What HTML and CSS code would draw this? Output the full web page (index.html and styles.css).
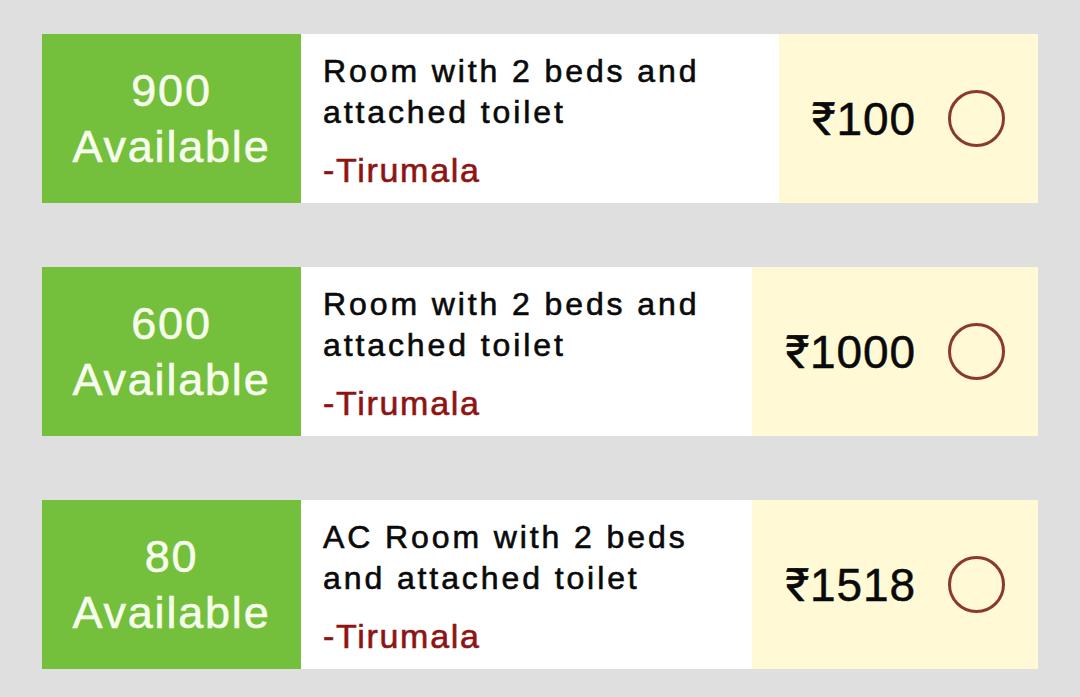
FILE: index.html
```html
<!DOCTYPE html>
<html>
<head>
<meta charset="utf-8">
<link rel="stylesheet" href="styles.css">
</head>
<body>
<div class="list">
  <div class="card">
    <div class="avail"><span>900</span><span>Available</span></div>
    <div class="info">
      <div class="title">Room with 2 beds and attached toilet</div>
      <div class="place">-Tirumala</div>
    </div>
    <div class="price"><span class="amt">₹100</span><span class="radio"></span></div>
  </div>
  <div class="card">
    <div class="avail"><span>600</span><span>Available</span></div>
    <div class="info">
      <div class="title">Room with 2 beds and attached toilet</div>
      <div class="place">-Tirumala</div>
    </div>
    <div class="price"><span class="amt">₹1000</span><span class="radio"></span></div>
  </div>
  <div class="card">
    <div class="avail"><span>80</span><span>Available</span></div>
    <div class="info">
      <div class="title">AC Room with 2 beds and attached toilet</div>
      <div class="place">-Tirumala</div>
    </div>
    <div class="price"><span class="amt">₹1518</span><span class="radio"></span></div>
  </div>
</div>
</body>
</html>
```
FILE: styles.css
```css
html, body {
  margin: 0;
  padding: 0;
  background: #dfdfdf;
  font-family: "Liberation Sans", Roboto, "Noto Sans", "DejaVu Sans", sans-serif;
}
.list {
  display: flex;
  flex-direction: column;
  gap: 64px;
  padding: 34px 42px 0 42px;
}
.card {
  display: flex;
  height: 169px;
  background: #ffffff;
}
.avail {
  width: 259px;
  flex: none;
  background: #74bf3b;
  color: #f6fdec;
  display: flex;
  flex-direction: column;
  align-items: center;
  justify-content: center;
  font-size: 45px;
  line-height: 56px;
  letter-spacing: 1.8px;
  -webkit-text-stroke: 0.6px #f6fdec;
}
.info {
  flex: 1;
  padding: 17px 20px 0 22px;
  color: #0a0a0a;
}
.title {
  font-size: 32px;
  line-height: 41px;
  letter-spacing: 2.9px;
  max-width: 420px;
  -webkit-text-stroke: 0.6px #0a0a0a;
}
.place {
  margin-top: 17px;
  font-size: 34px;
  line-height: 40px;
  letter-spacing: 1.7px;
  color: #8e1414;
  -webkit-text-stroke: 0.6px #8e1414;
}
.price {
  flex: none;
  background: #fff9d5;
  display: flex;
  align-items: center;
  gap: 32px;
  padding: 0 33px;
}
.amt {
  font-size: 46px;
  letter-spacing: 0.9px;
  color: #0a0a0a;
  -webkit-text-stroke: 0.5px #0a0a0a;
}
.radio {
  width: 51px;
  height: 51px;
  border: 3px solid #8a3a2a;
  border-radius: 50%;
}
```
